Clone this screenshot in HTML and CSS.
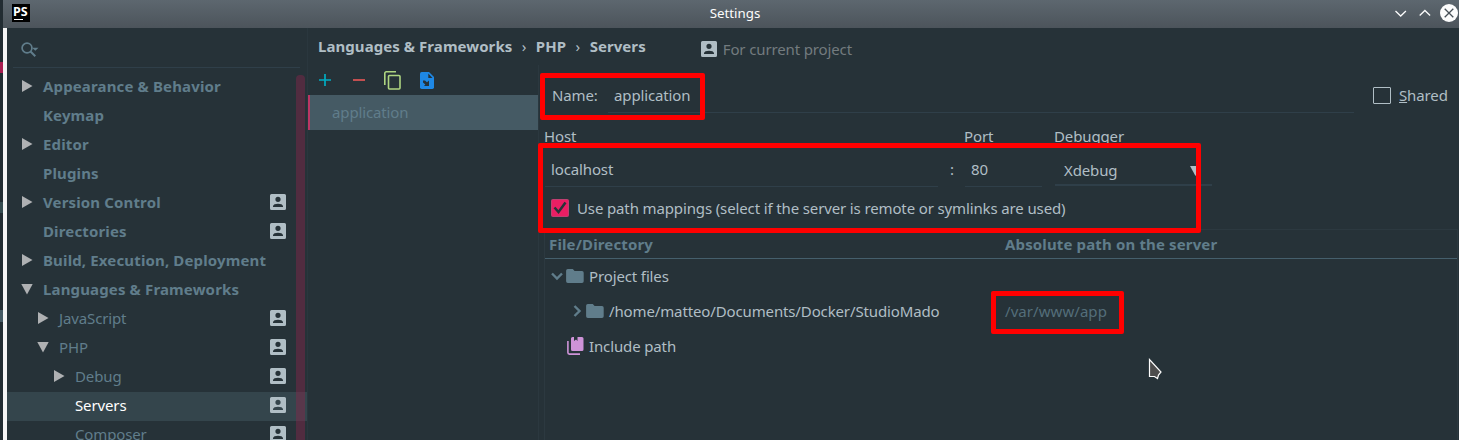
FILE: index.html
```
<!DOCTYPE html>
<html lang="en">
<head>
<meta charset="utf-8">
<title>Settings</title>
<link rel="stylesheet" href="styles.css">
</head>
<body>
<svg class="defs" width="0" height="0">
  <symbol id="project" viewBox="0 0 16 16"><path fill="#b0bec5" fill-rule="evenodd" d="M1.500 0h13A1.500 1.500 0 0 1 16 1.500v13a1.500 1.500 0 0 1-1.500 1.500h-13A1.500 1.500 0 0 1 0 14.500v-13A1.500 1.500 0 0 1 1.500 0zM8 2.700a2.600 2.600 0 1 0 0 5.200 2.600 2.600 0 0 0 0-5.200zM3 13h10v-.8C13 10.500 10.500 9.700 8 9.700s-5 .8-5 2.500z"/></symbol>
  <symbol id="right" viewBox="0 0 12 12"><path fill="#afb1b3" d="M1 0 11.500 6 1 12z"/></symbol>
  <symbol id="down" viewBox="0 0 12 12"><path fill="#afb1b3" d="M.3 1h11.400L6 11.500z"/></symbol>
  <symbol id="folder" viewBox="0 0 18 14"><path fill="#607d8b" d="M1.800 0h5l1.800 2H16a1.700 1.700 0 0 1 1.700 1.700v8.600A1.700 1.700 0 0 1 16 14H1.800A1.700 1.700 0 0 1 .1 12.300V1.700A1.700 1.700 0 0 1 1.800 0z"/></symbol>
</svg>
<div class="desktop">
  <div class="behind"><i class="mark pink"></i><i class="mark teal"></i><i class="mark grey"></i></div>
  <div class="window">
    <header class="titlebar">
      <div class="logo"><b>PS</b><i></i></div>
      <div class="title">Settings</div>
      <svg class="controls" width="66" height="20" viewBox="0 0 66 20" fill="none">
        <path d="M3.500 8l5.200 5 5.200-5M27.700 12.500l5.200-5 5.200 5" stroke="#fcfcfc" stroke-width="1.300"/>
        <circle cx="57" cy="10" r="9" fill="#fcfcfc"/>
        <path d="M52.700 5.700l8.600 8.600m0-8.600l-8.600 8.600" stroke="#475057" stroke-width="1.300"/>
      </svg>
    </header>
    <div class="content">
      <nav class="sidebar">
        <div class="search"><svg width="18" height="16" viewBox="0 0 18 16" fill="none"><circle cx="6" cy="6" r="4.900" stroke="#607d8b" stroke-width="1.700"/><path d="M9.300 9.300l5 5" stroke="#607d8b" stroke-width="2"/><path d="M11 5.800h6.500l-3.200 3z" fill="#607d8b"/></svg></div>
        <div class="treewrap">
          <ul class="tree">
            <li class="bold"><svg class="arrow"><use href="#right"/></svg><span>Appearance &amp; Behavior</span></li>
            <li class="bold leaf"><span>Keymap</span></li>
            <li class="bold"><svg class="arrow"><use href="#right"/></svg><span>Editor</span></li>
            <li class="bold leaf"><span>Plugins</span></li>
            <li class="bold"><svg class="arrow"><use href="#right"/></svg><span>Version Control</span><svg class="proj"><use href="#project"/></svg></li>
            <li class="bold leaf"><span>Directories</span><svg class="proj"><use href="#project"/></svg></li>
            <li class="bold"><svg class="arrow"><use href="#right"/></svg><span>Build, Execution, Deployment</span></li>
            <li class="bold"><svg class="arrow"><use href="#down"/></svg><span>Languages &amp; Frameworks</span></li>
            <li class="level1"><svg class="arrow"><use href="#right"/></svg><span>JavaScript</span><svg class="proj"><use href="#project"/></svg></li>
            <li class="level1"><svg class="arrow"><use href="#down"/></svg><span>PHP</span><svg class="proj"><use href="#project"/></svg></li>
            <li class="level2"><svg class="arrow"><use href="#right"/></svg><span>Debug</span><svg class="proj"><use href="#project"/></svg></li>
            <li class="level2leaf selected"><span>Servers</span><svg class="proj"><use href="#project"/></svg></li>
            <li class="level2leaf"><span>Composer</span><svg class="proj"><use href="#project"/></svg></li>
          </ul>
          <div class="scrollbar"></div>
        </div>
      </nav>
      <main class="main">
        <div class="crumbs">
          <span>Languages &amp; Frameworks</span><i>›</i><span>PHP</span><i>›</i><span>Servers</span>
          <div class="scope"><svg class="proj"><use href="#project"/></svg><span>For current project</span></div>
        </div>
        <div class="panes">
          <section class="servers">
            <div class="tools">
              <svg width="12" height="12" viewBox="0 0 12 12"><path d="M6 0v12M0 6h12" stroke="#00acc1" stroke-width="1.700"/></svg>
              <svg width="12" height="12" viewBox="0 0 12 12"><path d="M0 6h12" stroke="#e05555" stroke-width="1.700"/></svg>
              <svg class="copy" width="17" height="19" viewBox="0 0 17 19" fill="none" stroke="#aed581" stroke-width="1.600"><path d="M.8 14V2.300A1.500 1.500 0 0 1 2.300.8H12"/><rect x="4.500" y="4.500" width="11.500" height="13.500" rx="1"/></svg>
              <svg class="import" width="14" height="17" viewBox="0 0 14 17"><path fill="#1e88e5" d="M1.700 0H9l5 5v10.300a1.700 1.700 0 0 1-1.700 1.700H1.700A1.700 1.700 0 0 1 0 15.300V1.700A1.700 1.700 0 0 1 1.700 0z"/><path fill="#263238" d="M8.300 1.500V6h4.200zM3 8.500h2l2 1.700L9 8.500V14H4l1.300-1.500L3 10.500z"/></svg>
            </div>
            <div class="server">application</div>
          </section>
          <section class="form">
            <div class="namerow"><label>Name:</label><div class="field">application</div><span class="box"></span><span class="shared"><u>S</u>hared</span></div>
            <div class="labels"><span>Host</span><span>Port</span><span>Debugger</span></div>
            <div class="inputs"><div class="field host">localhost</div><span class="colon">:</span><div class="field port">80</div><div class="combo"><span>Xdebug</span><svg width="11" height="10" viewBox="0 0 11 10"><path fill="#b0bec5" d="M0 0h11L5.500 10z"/></svg></div></div>
            <div class="usemap"><svg width="18" height="18" viewBox="0 0 18 18"><rect x=".5" y=".5" width="17" height="17" rx="1" fill="#e91e63" stroke="#bd3f70"/><path d="M3.500 8.500l4 4.500 7-9.500" fill="none" stroke="#263238" stroke-width="2.500"/></svg><span>Use path mappings (select if the server is remote or symlinks are used)</span></div>
            <div class="table">
              <div class="thead"><span>File/Directory</span><span>Absolute path on the server</span></div>
              <div class="row"><div class="cell"><svg width="12" height="12" viewBox="0 0 12 12"><path d="M1 3.500l5 5 5-5" fill="none" stroke="#607d8b" stroke-width="2.400"/></svg><svg class="folder"><use href="#folder"/></svg><span>Project files</span></div></div>
              <div class="row"><div class="cell nested"><svg width="12" height="12" viewBox="0 0 12 12"><path d="M3.500 1l5 5-5 5" fill="none" stroke="#607d8b" stroke-width="2.400"/></svg><svg class="folder"><use href="#folder"/></svg><span>/home/matteo/Documents/Docker/StudioMado</span></div><span class="remote">/var/www/app</span></div>
              <div class="row"><div class="cell include"><svg width="17" height="18" viewBox="0 0 17 18"><path d="M.9 4v11.600a1.500 1.500 0 0 0 1.500 1.500H13" fill="none" stroke="#ce93d8" stroke-width="1.600"/><path fill="#ce93d8" d="M5.500 0H7v4l2-1.500L10.500 4V0H15a1.500 1.500 0 0 1 1.500 1.500v11A1.500 1.500 0 0 1 15 14H5.500A1.500 1.500 0 0 1 4 12.500v-11A1.500 1.500 0 0 1 5.500 0z"/></svg><span>Include path</span></div></div>
            </div>
          </section>
        </div>
      </main>
    </div>
  </div>
  <div class="callout callout-name"></div>
  <div class="callout callout-host"></div>
  <div class="callout callout-path"></div>
  <svg class="cursor" width="16" height="24" viewBox="0 0 16 24"><path d="M1.500 1.500v17h5l3 2 1-3.500 2.500-3z" fill="#4d4d4d" stroke="#fcfcfc" stroke-width="1.200"/></svg>
</div>
</body>
</html>
```
FILE: styles.css
```
* { box-sizing: border-box; }
body { margin: 0; background: #263238; font: 15px/20px "Noto Sans", sans-serif; letter-spacing: -.13px; color: #b0bec5; overflow: hidden; }
svg { display: block; flex: none; }
span { white-space: nowrap; }
.defs { position: absolute; }
.desktop { position: relative; display: flex; width: 1459px; height: 440px; overflow: hidden; }
.behind { width: 3px; background: #222c32; padding-top: 62px; flex: none; }
.mark { display: block; width: 3px; }
.pink { height: 11px; background: #a91d50; }
.teal { height: 11px; margin-top: 129px; background: #354c50; }
.grey { height: 12px; margin-top: 97px; background: #455a64; }
.window { flex: 1; display: flex; flex-direction: column; min-width: 0; }
.titlebar { height: 28px; flex: none; display: flex; align-items: center; padding: 0 1px 2px 9px; background: linear-gradient(#5d676f, #4c545b); color: #fcfcfc; font-size: 13.3px; letter-spacing: 0; }
.logo { width: 18px; height: 18px; background: #000; color: #fff; padding: 2px 1px 0; }
.logo b { display: block; font: bold 12.500px/11px "Noto Sans", sans-serif; }
.logo i { display: block; width: 9px; height: 1px; background: #fff; margin: 2px 0 0 1px; }
.title { flex: 1; text-align: center; padding-left: 48px; }
.content { flex: 1; display: flex; min-height: 0; }
.sidebar { width: 305px; border-left: 4px solid #f5f5f5; border-right: 1px solid #2a373e; flex: none; }
.search { height: 40px; margin: 0 7px 0 6px; padding: 14px 0 0 8px; border-bottom: 1px solid #2f3f49; }
.treewrap { position: relative; padding-top: 5px; }
.tree { list-style: none; margin: 0; padding: 0; }
.tree li { height: 29px; display: flex; align-items: center; padding: 0 21px 4px 14px; color: #607d8b; }
.tree li span { margin-left: 10px; }
.tree .bold { font-weight: bold; letter-spacing: .14px; }
.tree .leaf { padding-left: 26px; }
.tree .level1 { padding-left: 30px; }
.tree .level2 { padding-left: 46px; }
.tree .level2leaf { padding-left: 58px; }
.tree .selected { background: #34454c; color: #fff; }
.arrow { width: 12px; height: 12px; }
.proj { width: 16px; height: 16px; }
.tree .proj { margin-left: auto; }
.scrollbar { position: absolute; top: 7px; right: 2px; width: 9px; height: 400px; border-radius: 4px 4px 0 0; background: rgba(136, 37, 75, .45); }
.main { flex: 1; min-width: 0; display: flex; flex-direction: column; }
.crumbs { height: 37px; flex: none; display: flex; align-items: center; padding: 0 0 2px 10px; font-weight: bold; letter-spacing: .06px; }
.crumbs i { font-style: normal; font-weight: normal; width: 23.5px; text-align: center; }
.scope { display: flex; align-items: center; gap: 6px; margin: 6px 0 0 55px; color: #737b7f; font-weight: normal; letter-spacing: -.13px; }
.panes { flex: 1; display: flex; }
.servers { width: 231px; flex: none; border-right: 1px solid #2b383f; }
.tools { height: 30px; display: flex; align-items: center; padding-left: 11px; }
.tools svg + svg { margin-left: 22px; }
.tools svg.copy, .tools svg.import { margin-left: 19px; }
.server { height: 35px; line-height: 35px; padding-left: 22px; border-left: 2px solid #bd3665; background: #455a64; color: #607d8b; }
.form { flex: 1; min-width: 0; display: flex; flex-direction: column; }
.namerow { height: 48px; display: flex; padding: 20px 0 0 13px; }
.namerow label { width: 45px; }
.namerow .field { width: 746px; margin-left: 11px; }
.field { height: 28px; padding-left: 6px; border-bottom: 1px solid #2f3f49; }
.box { width: 18px; height: 17px; margin: 2px 8px 0 19px; border: 1px solid #b0bec5; border-radius: 1px; }
.labels { height: 44px; display: flex; padding: 13px 0 0 5px; }
.labels span:nth-child(1) { width: 420px; }
.labels span:nth-child(2) { width: 90px; }
.inputs { height: 33px; display: flex; padding: 2px 0 0 6px; }
.inputs .host { width: 393px; }
.colon { width: 27px; padding-left: 12px; }
.inputs .port { width: 77px; }
.combo { width: 157px; height: 27px; margin-left: 13px; padding: 1px 11px 0 9px; border-bottom: 2px solid #2f3f49; display: flex; justify-content: space-between; }
.combo svg { margin-top: 6px; }
.usemap { height: 39px; display: flex; align-items: center; gap: 8px; padding: 0 0 4px 12px; }
.table { flex: 1; margin: 0 1px 0 5px; border: 1px solid #2c3940; border-bottom: 0; }
.thead { height: 29px; display: flex; align-items: center; padding-left: 4px; border-bottom: 1px solid #455f6c; color: #607d8b; font-weight: bold; letter-spacing: .14px; }
.thead span:first-child { width: 456px; }
.row { height: 35px; display: flex; align-items: center; padding-bottom: 2px; }
.cell { width: 460px; display: flex; align-items: center; padding-left: 6px; }
.cell.nested { padding-left: 26px; }
.cell.include { padding-left: 22px; }
.folder { width: 18px; height: 14px; margin-left: 3px; }
.cell span { margin-left: 5px; }
.remote { color: #546e7a; letter-spacing: .06px; }
.callout { position: absolute; border: 5px solid #f00; border-radius: 2px; }
.callout-name { left: 540px; top: 73px; width: 165px; height: 47px; }
.callout-host { left: 538px; top: 143px; width: 663px; height: 90px; }
.callout-path { left: 991px; top: 291px; width: 133px; height: 43px; }
.cursor { position: absolute; left: 1148px; top: 358px; }
```
